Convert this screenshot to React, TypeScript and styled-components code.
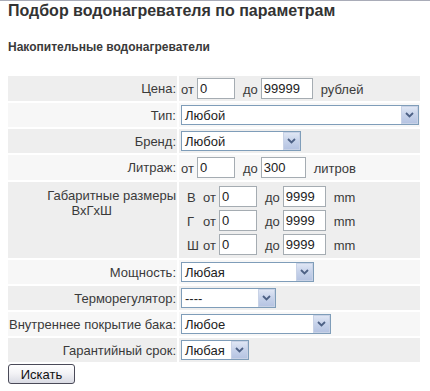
import React from 'react'
import styled, { createGlobalStyle } from 'styled-components'

const GlobalStyle = createGlobalStyle`
    html, body {
        margin: 0;
        padding: 0;
        background: #ffffff;
    }
    body {
        font-family: "Liberation Sans", Arial, sans-serif;
        color: #333333;
    }
`

const Page = styled.div`
    width: 430px;
    height: 391px;
    box-sizing: border-box;
    border-top: 1px solid #a9acb8;
    padding: 0 8px;
    overflow: hidden;
`

const Title = styled.h1`
    margin: 1px 0 0;
    font-size: 16px;
    line-height: 18px;
    font-weight: bold;
    color: #333333;
`

const Subtitle = styled.h2`
    margin: 20px 0 0;
    font-size: 12px;
    line-height: 14px;
    font-weight: bold;
    color: #3a3a3a;
`

const FilterTable = styled.table`
    margin: 20px 0 0 -2px;
    width: 416px;
    border-collapse: separate;
    border-spacing: 2px;
    font-size: 13px;
`

const Row = styled.tr<{ $shade: boolean; $h?: number }>`
    height: ${(p) => p.$h ?? 24}px;

    td {
        background: ${(p) => (p.$shade ? '#eeeeee' : '#f7f7f7')};
    }
`

const LabelCell = styled.td<{ $top?: boolean }>`
    width: 168px;
    padding: ${(p) => (p.$top ? '6px 1px 0 0' : '0 1px 0 0')};
    text-align: right;
    vertical-align: ${(p) => (p.$top ? 'top' : 'middle')};
    white-space: nowrap;
    color: #3a3a3a;
    line-height: 15px;
`

const LabelLine = styled.div<{ $shift?: number }>`
    margin-right: ${(p) => p.$shift ?? 0}px;
`

const ValueCell = styled.td`
    padding: 0 0 0 2px;
    vertical-align: middle;
`

const Line = styled.div<{ $indent?: number }>`
    display: flex;
    align-items: center;
    gap: 3px;
    height: 24px;
    padding-left: ${(p) => p.$indent ?? 0}px;
    color: #3a3a3a;
`

const Word = styled.span<{ $w?: number }>`
    display: inline-block;
    width: ${(p) => (p.$w ? `${p.$w}px` : 'auto')};
    padding-top: 2px;
`

const TextInput = styled.input<{ $w: number }>`
    box-sizing: border-box;
    width: ${(p) => p.$w}px;
    height: 21px;
    margin: 0 5px 0 0;
    padding: 0 2px;
    border: 1px solid #a5acb2;
    background: #ffffff;
    font-family: "Liberation Sans", Arial, sans-serif;
    font-size: 13px;
    color: #222222;
    outline: none;
`

const SelectBox = styled.div<{ $w: number }>`
    box-sizing: border-box;
    display: flex;
    align-items: center;
    width: ${(p) => p.$w}px;
    height: 20px;
    border: 1px solid #7f9db9;
    background: #ffffff;
    font-size: 13px;
    color: #222222;
`

const SelectText = styled.span`
    flex: 1;
    padding-left: 3px;
    white-space: nowrap;
    overflow: hidden;
`

const ArrowBox = styled.span`
    box-sizing: border-box;
    display: flex;
    align-items: center;
    justify-content: center;
    width: 17px;
    height: 18px;
    border: 1px solid #c8d2e6;
    background: linear-gradient(to bottom, #dfe6f4 0%, #c6d2ea 50%, #b6c4e2 100%);
`

const SearchButton = styled.button`
    box-sizing: border-box;
    width: 67px;
    height: 20px;
    margin-top: 0;
    padding: 0;
    border: 1px solid #4a4a58;
    border-radius: 3px;
    background: linear-gradient(to bottom, #ffffff 0%, #f3f3f6 45%, #d9dae3 100%);
    font-family: "Liberation Sans", Arial, sans-serif;
    font-size: 13px;
    color: #111111;
`

const Dropdown: React.FC<{ width: number; value: string }> = ({ width, value }) => (
    <SelectBox $w={width}>
        <SelectText>{value}</SelectText>
        <ArrowBox>
            <svg width="9" height="6" viewBox="0 0 9 6">
                <path d="M1 1 L4.5 4.5 L8 1" fill="none" stroke="#4d6185" strokeWidth="1.8" />
            </svg>
        </ArrowBox>
    </SelectBox>
)

type Dim = { letter: string; to: number }

const DIMS: Dim[] = [
    { letter: 'В', to: 43 },
    { letter: 'Г', to: 43 },
    { letter: 'Ш', to: 43 },
]

const App: React.FC = () => {
    return (
        <>
            <GlobalStyle />
            <Page>
                <Title>Подбор водонагревателя по параметрам</Title>
                <Subtitle>Накопительные водонагреватели</Subtitle>

                <FilterTable>
                    <tbody>
                        <Row $shade $h={25}>
                            <LabelCell>Цена:</LabelCell>
                            <ValueCell>
                                <Line>
                                    <Word>от</Word>
                                    <TextInput $w={38} defaultValue="0" />
                                    <Word>до</Word>
                                    <TextInput $w={52} defaultValue="99999" />
                                    <Word>рублей</Word>
                                </Line>
                            </ValueCell>
                        </Row>
                        <Row $shade={false}>
                            <LabelCell>Тип:</LabelCell>
                            <ValueCell>
                                <Dropdown width={238} value="Любой" />
                            </ValueCell>
                        </Row>
                        <Row $shade>
                            <LabelCell>Бренд:</LabelCell>
                            <ValueCell>
                                <Dropdown width={120} value="Любой" />
                            </ValueCell>
                        </Row>
                        <Row $shade={false} $h={25}>
                            <LabelCell>Литраж:</LabelCell>
                            <ValueCell>
                                <Line>
                                    <Word>от</Word>
                                    <TextInput $w={38} defaultValue="0" />
                                    <Word>до</Word>
                                    <TextInput $w={45} defaultValue="300" />
                                    <Word>литров</Word>
                                </Line>
                            </ValueCell>
                        </Row>
                        <Row $shade $h={76}>
                            <LabelCell $top>
                                <LabelLine>Габаритные размеры</LabelLine>
                                <LabelLine $shift={64}>ВхГхШ</LabelLine>
                            </LabelCell>
                            <ValueCell>
                                {DIMS.map((d, i) => (
                                    <Line key={i} $indent={6}>
                                        <Word $w={13}>{d.letter}</Word>
                                        <Word>от</Word>
                                        <TextInput $w={38} defaultValue="0" />
                                        <Word>до</Word>
                                        <TextInput $w={d.to} defaultValue="9999" />
                                        <Word>mm</Word>
                                    </Line>
                                ))}
                            </ValueCell>
                        </Row>
                        <Row $shade={false}>
                            <LabelCell>Мощность:</LabelCell>
                            <ValueCell>
                                <Dropdown width={133} value="Любая" />
                            </ValueCell>
                        </Row>
                        <Row $shade>
                            <LabelCell>Терморегулятор:</LabelCell>
                            <ValueCell>
                                <Dropdown width={95} value="----" />
                            </ValueCell>
                        </Row>
                        <Row $shade={false}>
                            <LabelCell>Внутреннее покрытие бака:</LabelCell>
                            <ValueCell>
                                <Dropdown width={150} value="Любое" />
                            </ValueCell>
                        </Row>
                        <Row $shade>
                            <LabelCell>Гарантийный срок:</LabelCell>
                            <ValueCell>
                                <Dropdown width={68} value="Любая" />
                            </ValueCell>
                        </Row>
                    </tbody>
                </FilterTable>

                <SearchButton>Искать</SearchButton>
            </Page>
        </>
    )
}

export default App
